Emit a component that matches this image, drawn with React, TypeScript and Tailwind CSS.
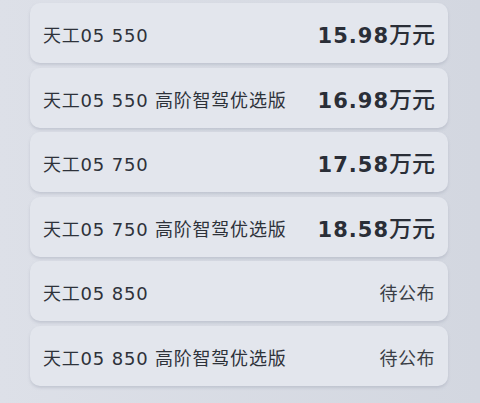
const rows: { name: string; price: string | null }[] = [
  { name: "天工05 550", price: "15.98" },
  { name: "天工05 550 高阶智驾优选版", price: "16.98" },
  { name: "天工05 750", price: "17.58" },
  { name: "天工05 750 高阶智驾优选版", price: "18.58" },
  { name: "天工05 850", price: null },
  { name: "天工05 850 高阶智驾优选版", price: null },
];

export default function App() {
  return (
    <div
      className="w-[480px] h-[403px] overflow-hidden bg-gradient-to-r from-[#dde0e8] to-[#d3d7e0] pl-[30px] pt-[3px]"
      style={{ fontFamily: '"DejaVu Sans", "Noto Sans CJK SC", sans-serif' }}
    >
      <div className="flex w-[418px] flex-col gap-[4.6px]">
        {rows.map((r) => (
          <div
            key={r.name}
            className="flex h-[60px] items-center justify-between rounded-[10px] bg-[#e3e6ed] pl-[13px] pr-[13px] pt-[5px] shadow-[0_2px_3px_rgba(150,156,172,0.35)]"
          >
            <span className="text-[18px] tracking-[0.8px] text-[#2e323a]">{r.name}</span>
            {r.price ? (
              <span className="flex items-baseline text-[#2a2e37]">
                <span className="text-[21px] font-bold tracking-[1px]">{r.price}</span>
                <span className="text-[23px] font-medium">万元</span>
              </span>
            ) : (
              <span className="text-[18px] tracking-[0.5px] text-[#3a3e46]">待公布</span>
            )}
          </div>
        ))}
      </div>
    </div>
  );
}
